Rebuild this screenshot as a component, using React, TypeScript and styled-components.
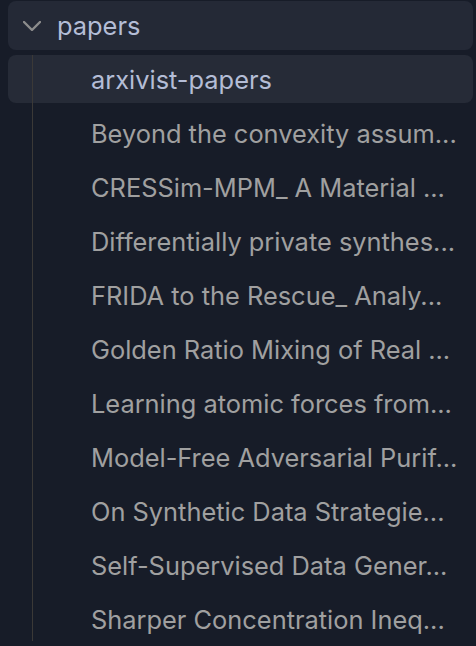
import React from 'react';
import styled, { createGlobalStyle } from 'styled-components';

const GlobalStyle = createGlobalStyle`
  html, body {
    margin: 0;
    padding: 0;
    background: #171c28;
    font-family: Inter, "Noto Sans", "Liberation Sans", sans-serif;
  }
`;

// titles as the sidebar shows them, already shortened
const papers = [
  'Beyond the convexity assum...',
  'CRESSim-MPM_ A Material ...',
  'Differentially private synthes...',
  'FRIDA to the Rescue_ Analy...',
  'Golden Ratio Mixing of Real ...',
  'Learning atomic forces from...',
  'Model-Free Adversarial Purif...',
  'On Synthetic Data Strategie...',
  'Self-Supervised Data Gener...',
  'Sharper Concentration Ineq...',
];

const Panel = styled.div`
  width: 476px;
  height: 646px;
  box-sizing: border-box;
  padding: 1px 3px 0 8px;
  overflow: hidden;
  display: flex;
  flex-direction: column;
  gap: 5px;
`;

const Header = styled.div`
  height: 49px;
  border-radius: 8px;
  background: #242936;
  display: flex;
  align-items: center;
  padding-left: 15px;
  gap: 16px;
  color: #b4bdd6;
  font-size: 25.4px;
`;

const Children = styled.div`
  position: relative;
  display: flex;
  flex-direction: column;
  gap: 6px;

  &::before {
    content: '';
    position: absolute;
    left: 24px;
    top: 0;
    width: 1px;
    height: 586px;
    background: #3b3937;
    z-index: 1;
  }
`;

const Row = styled.div<{ $active?: boolean }>`
  height: 48px;
  border-radius: 8px;
  background: ${(p) => (p.$active ? '#262b37' : 'transparent')};
  color: ${(p) => (p.$active ? '#b4bdd6' : '#a0a0a0')};
  display: flex;
  align-items: center;
  padding: 0 10px 0 83px;
  font-size: 25.4px;
  white-space: nowrap;
`;

const Chevron = () => (
  <svg width="18" height="10" viewBox="0 0 18 10" fill="none">
    <path d="M1 1l8 8 8-8" stroke="#8c8c8c" strokeWidth="2.4" strokeLinecap="round" strokeLinejoin="round" />
  </svg>
);

export default function App() {
  return (
    <>
      <GlobalStyle />
      <Panel>
        <Header>
          <Chevron />
          <span>papers</span>
        </Header>
        <Children>
          <Row $active>arxivist-papers</Row>
          {papers.map((t) => (
            <Row key={t}>{t}</Row>
          ))}
        </Children>
      </Panel>
    </>
  );
}
